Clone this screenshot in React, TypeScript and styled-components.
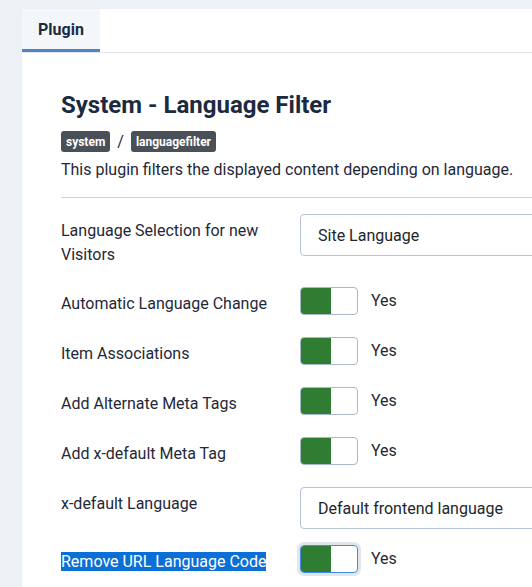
import React from 'react';
import styled, { createGlobalStyle } from 'styled-components';

const GlobalStyle = createGlobalStyle`
  html, body {
    margin: 0;
    padding: 0;
    background: #edf1f6;
    overflow: hidden;
  }

  body {
    font-family: Roboto, 'Noto Sans', sans-serif;
    color: #1f2838;
  }
`;

const Page = styled.div`
  padding: 9px 0 0 22px;
  min-height: 587px;
  box-sizing: border-box;
`;

const Card = styled.div`
  background: #ffffff;
  width: 700px;
  min-height: 578px;
`;

const TabBar = styled.div`
  display: flex;
  border-bottom: 1px solid #dfe6ef;
`;

const Tab = styled.div`
  height: 40px;
  padding: 0 16px;
  display: flex;
  align-items: center;
  background: #f4f7fa;
  border-bottom: 3px solid #5283c2;
  font-size: 16px;
  font-weight: 700;
  color: #1c2b44;
`;

const Body = styled.div`
  padding: 38px 0 0 39px;
`;

const Title = styled.h2`
  margin: 0 0 12px;
  font-size: 24px;
  line-height: 28px;
  font-weight: 700;
  color: #1c2a3f;
`;

const BadgeRow = styled.div`
  display: flex;
  align-items: center;
  gap: 7px;
  height: 21px;
`;

const Badge = styled.span`
  display: inline-flex;
  align-items: center;
  height: 21px;
  padding: 0 5px;
  border-radius: 3px;
  background: #4a5058;
  color: #ffffff;
  font-size: 12px;
  font-weight: 700;
`;

const Slash = styled.span`
  font-size: 16px;
  color: #1f2838;
`;

const Description = styled.p`
  margin: 6px 0 0;
  font-size: 16px;
  line-height: 24px;
`;

const Divider = styled.hr`
  width: 600px;
  margin: 15px 0 16px;
  border: 0;
  border-top: 1px solid #cdd1d6;
`;

const FieldRow = styled.div<{ tight?: boolean }>`
  display: flex;
  align-items: flex-start;
  margin-bottom: ${(props) => (props.tight ? '16px' : '20px')};
`;

const Label = styled.div`
  width: 219px;
  padding: 5px 20px 0 0;
  font-size: 16px;
  line-height: 24px;
  color: #1f2838;
`;

const Selected = styled.span`
  background: #0b6fd6;
  color: #ffffff;
`;

const Select = styled.div`
  width: 320px;
  height: 42px;
  box-sizing: border-box;
  padding-left: 17px;
  display: flex;
  align-items: center;
  border: 1px solid #b6c3d6;
  border-radius: 4px;
  font-size: 16px;
  color: #22262a;
`;

const SwitchWrap = styled.div`
  height: 30px;
  display: flex;
  align-items: flex-start;
  gap: 13px;
`;

const Switch = styled.div<{ focused?: boolean }>`
  width: 58px;
  height: 28px;
  box-sizing: border-box;
  display: flex;
  border: 1px solid ${(props) => (props.focused ? '#3f8be3' : '#a9b7ca')};
  border-radius: 4px;
  overflow: hidden;
  box-shadow: ${(props) => (props.focused ? '0 0 0 3px #e2e6eb' : 'none')};
`;

const SwitchOn = styled.span`
  width: 31px;
  margin: -1px 0 -1px -1px;
  background: #2e7d32;
`;

const SwitchText = styled.span`
  font-size: 16px;
  line-height: 28px;
  color: #1f2838;
`;

type Field = {
  label: React.ReactNode;
  select?: string;
  focused?: boolean;
};

const fields: Field[] = [
  { label: 'Language Selection for new Visitors', select: 'Site Language' },
  { label: 'Automatic Language Change' },
  { label: 'Item Associations' },
  { label: 'Add Alternate Meta Tags' },
  { label: 'Add x-default Meta Tag' },
  { label: 'x-default Language', select: 'Default frontend language' },
  { label: <Selected>Remove URL Language Code</Selected>, focused: true },
];

const App = () => {
  return (
    <>
      <GlobalStyle />
      <Page>
        <Card>
          <TabBar>
            <Tab>Plugin</Tab>
          </TabBar>
          <Body>
            <Title>System - Language Filter</Title>
            <BadgeRow>
              <Badge>system</Badge>
              <Slash>/</Slash>
              <Badge>languagefilter</Badge>
            </BadgeRow>
            <Description>
              This plugin filters the displayed content depending on language.
            </Description>
            <Divider />
            {fields.map((field, index) => (
              <FieldRow key={index} tight={index === 5}>
                <Label>{field.label}</Label>
                {field.select ? (
                  <Select>{field.select}</Select>
                ) : (
                  <SwitchWrap>
                    <Switch focused={field.focused}>
                      <SwitchOn />
                    </Switch>
                    <SwitchText>Yes</SwitchText>
                  </SwitchWrap>
                )}
              </FieldRow>
            ))}
          </Body>
        </Card>
      </Page>
    </>
  );
};

export default App;
